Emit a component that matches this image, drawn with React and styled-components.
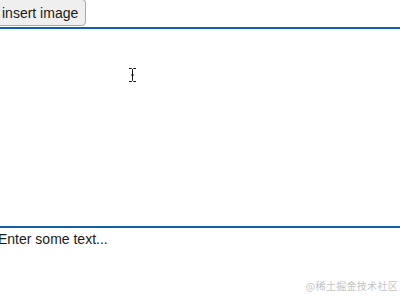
import styled, { createGlobalStyle } from "styled-components";

const GlobalStyle = createGlobalStyle`
  html, body {
    margin: 0;
    padding: 0;
    background: #ffffff;
    overflow: hidden;
  }
  body {
    font-family: "Liberation Sans", Arial, sans-serif;
  }
`;

const Page = styled.div`
  position: relative;
  width: 400px;
  height: 300px;
  overflow: hidden;
  background: #ffffff;
`;

const Toolbar = styled.div`
  display: flex;
  height: 27px;
  margin-left: -7px;
`;

const ToolButton = styled.button`
  height: 27px;
  margin-top: -1px;
  padding: 0 7px 0 8px;
  background: #efefef;
  border: 1px solid #a9a9a9;
  border-radius: 4px;
  font-family: "Liberation Sans", Arial, sans-serif;
  font-size: 14px;
  color: #1a1a1a;
  line-height: 1;
`;

const Editor = styled.div`
  position: relative;
  height: 197px;
  border-top: 2px solid #0e62ab;
  border-bottom: 2px solid #0e62ab;
`;

const Cursor = styled.svg`
  position: absolute;
  left: 128px;
  top: 38px;
`;

const Placeholder = styled.div`
  margin-left: -2px;
  padding-top: 3px;
  font-size: 14px;
  line-height: 17px;
  color: #1a1a1a;
`;

const Watermark = styled.div`
  position: absolute;
  right: 2px;
  bottom: 7px;
  font-family: "Noto Sans CJK SC", sans-serif;
  font-size: 10px;
  color: #c4c4c4;
  letter-spacing: 0.3px;
`;

const App = () => {
  return (
    <>
      <GlobalStyle />
      <Page>
        <Toolbar>
          <ToolButton>insert image</ToolButton>
        </Toolbar>
        <Editor>
          <Cursor width="9" height="16" viewBox="0 0 9 16">
            <path
              d="M1 1.5 H3.5 L4.5 2.5 L5.5 1.5 H8 M4.5 2.5 V13.5 M1 14.5 H3.5 L4.5 13.5 L5.5 14.5 H8 M3 8 H6"
              stroke="#111"
              strokeWidth="1"
              fill="none"
            />
          </Cursor>
        </Editor>
        <Placeholder>Enter some text...</Placeholder>
        <Watermark>@稀土掘金技术社区</Watermark>
      </Page>
    </>
  );
};

export default App;
